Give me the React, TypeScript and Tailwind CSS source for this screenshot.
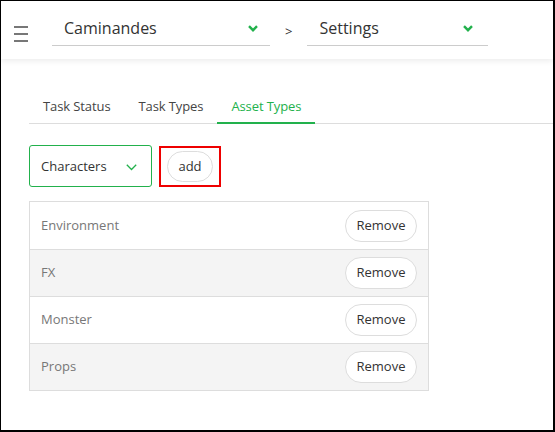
import React from "react";

function Chevron() {
  return (
    <svg width="10" height="7" viewBox="0 0 10 7" fill="none">
      <path d="M1 1.2 L5 5.2 L9 1.2" stroke="#22b14c" strokeWidth="2.4" />
    </svg>
  );
}

function ThinChevron() {
  return (
    <svg width="11" height="7" viewBox="0 0 11 7" fill="none">
      <path d="M0.8 0.8 L5.5 5.5 L10.2 0.8" stroke="#22b14c" strokeWidth="1.3" />
    </svg>
  );
}

export default function App() {
  const rows = ["Environment", "FX", "Monster", "Props"];
  return (
    <div
      className="w-[555px] h-[432px] bg-white border-l border-t border-r-2 border-b-2 border-black overflow-hidden text-[#333]"
      style={{ fontFamily: '"Open Sans", sans-serif' }}
    >
      <div className="h-[58px] flex items-start shadow-[0_2px_6px_rgba(0,0,0,0.08)] relative z-10">
        <div className="w-[14px] ml-[13px] mt-[25px] flex flex-col gap-[5px]">
          <div className="h-[2px] bg-[#777]" />
          <div className="h-[2px] bg-[#777]" />
          <div className="h-[2px] bg-[#777]" />
        </div>
        <div className="ml-[24px] w-[218px] h-[45px] pt-[10px] border-b border-[#ccc] flex items-center justify-between pl-[12px] pr-[12px]">
          <span className="text-[16px] text-[#333]">Caminandes</span>
          <Chevron />
        </div>
        <span className="ml-[15px] mr-[15px] text-[13px] mt-[21px]">&gt;</span>
        <div className="w-[181px] h-[45px] pt-[10px] border-b border-[#ccc] flex items-center justify-between pl-[12px] pr-[15px]">
          <span className="text-[16px] text-[#333]">Settings</span>
          <Chevron />
        </div>
      </div>

      <div className="pl-[28px] pt-[34px]">
        <div className="flex border-b border-[#ddd] text-[13px] tracking-[-0.1px] h-[31px]">
          <div className="px-[14px] pt-[4px] text-[#444]">Task Status</div>
          <div className="px-[14px] pt-[4px] text-[#444]">Task Types</div>
          <div className="px-[14px] pt-[4px] text-[#22b14c] border-b-2 border-[#22b14c] mb-[-1px]">Asset Types</div>
        </div>

        <div className="flex items-center mt-[21px] gap-[7px]">
          <div className="w-[123px] h-[42px] pt-[2px] border border-[#22b14c] rounded-[3px] flex items-center justify-between pl-[11px] pr-[14px] text-[13px] text-[#333]">
            <span>Characters</span>
            <ThinChevron />
          </div>
          <div className="w-[62px] h-[41px] border-2 border-[#e00] flex items-center justify-center">
            <div className="h-[31px] w-[46px] pt-[1px] border border-[#ddd] rounded-full flex items-center justify-center text-[13px] text-[#333]">
              add
            </div>
          </div>
        </div>

        <div className="mt-[14px] w-[400px] border border-[#ddd]">
          {rows.map((r, i) => (
            <div
              key={r}
              className={`h-[47px] flex items-center justify-between pl-[11px] pr-[11px] ${i > 0 ? "border-t border-[#ddd]" : ""} ${i % 2 === 1 ? "bg-[#f4f4f4]" : "bg-white"}`}
            >
              <span className="text-[13px] text-[#777]">{r}</span>
              <div className="h-[32px] w-[72px] bg-white border border-[#ddd] rounded-full flex items-center justify-center text-[13px] text-[#333]">
                Remove
              </div>
            </div>
          ))}
        </div>
      </div>
    </div>
  );
}
